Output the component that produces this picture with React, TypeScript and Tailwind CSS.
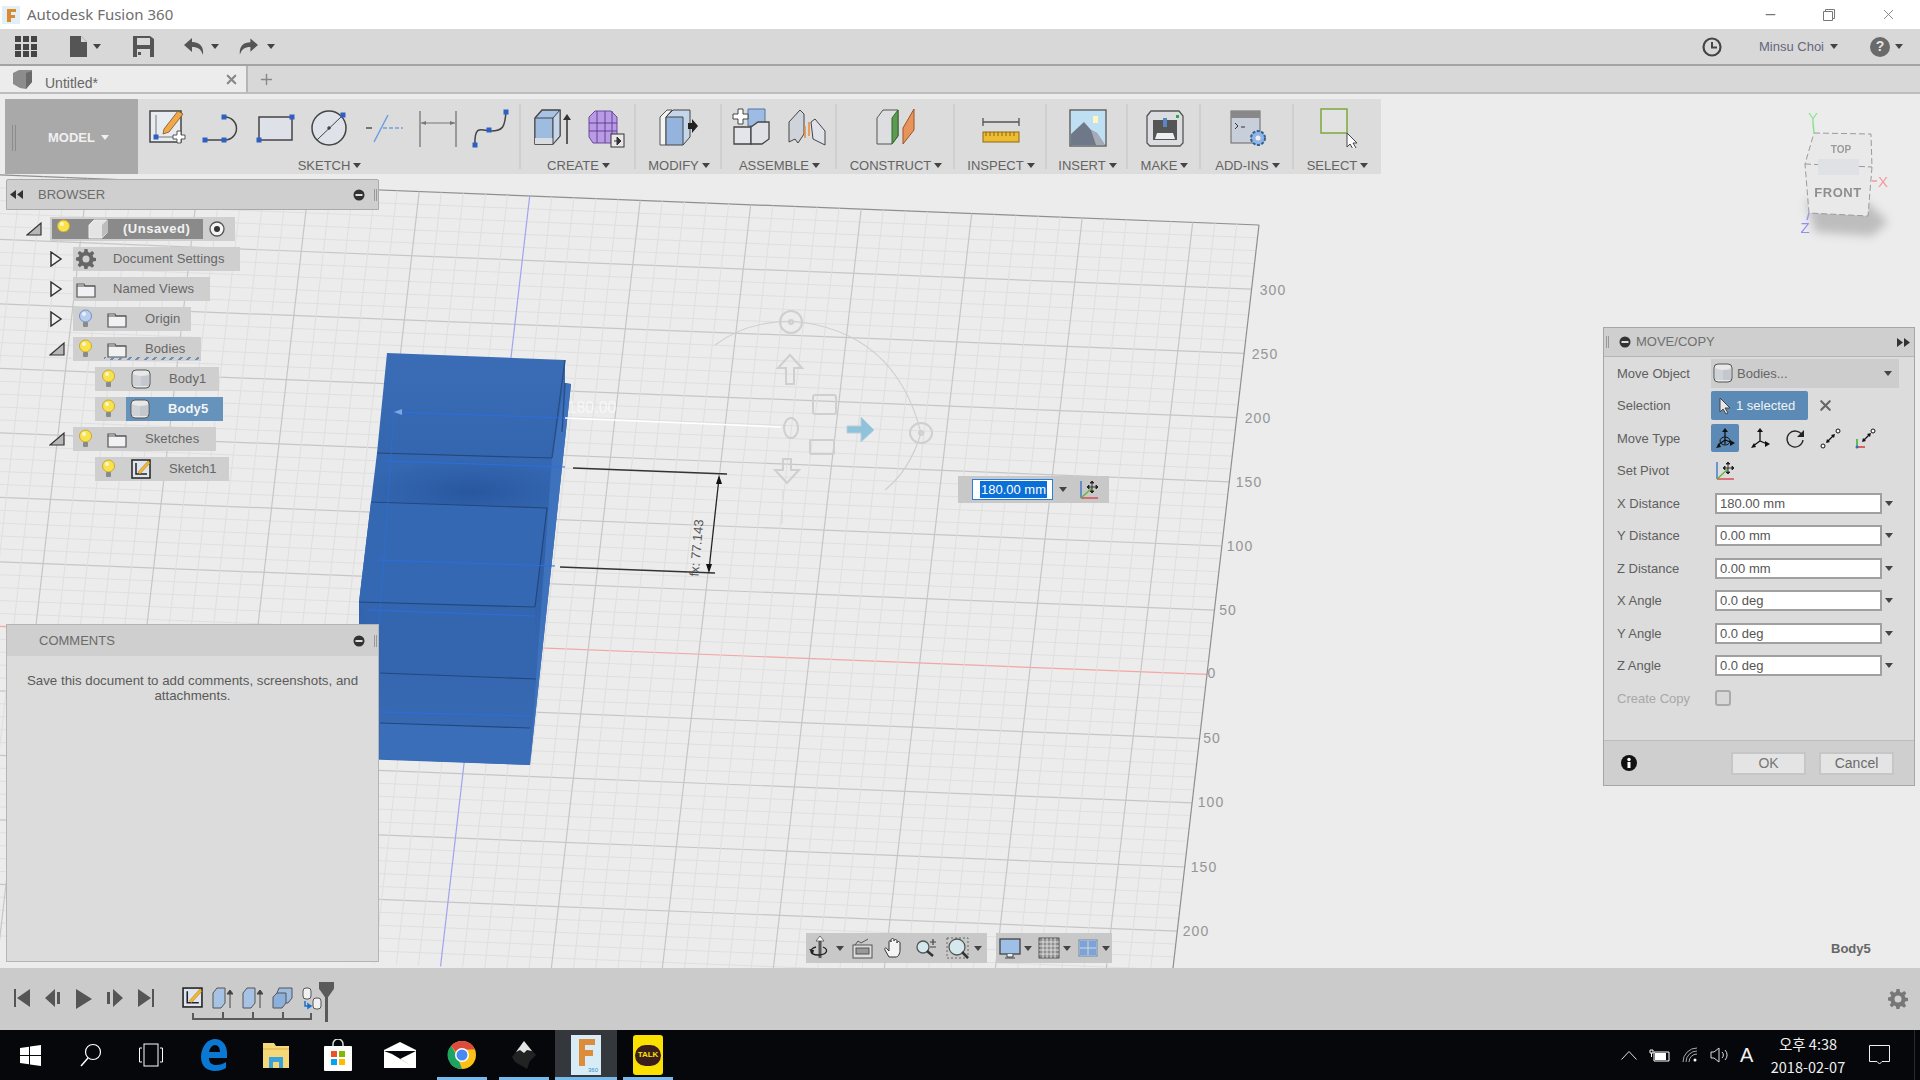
import type { ReactNode } from "react";
import { FiX, FiPlus, FiMinus } from "react-icons/fi";

const Caret = ({ className = "" }: { className?: string }) => (
  <svg width="8" height="5" viewBox="0 0 8 5" className={`shrink-0 ${className}`}>
    <path d="M0 0h8L4 5z" fill="currentColor" />
  </svg>
);

const Minus = () => (
  <svg width="12" height="12" viewBox="0 0 12 12">
    <circle cx="6" cy="6" r="5.5" fill="#333" />
    <rect x="2.5" y="5" width="7" height="2" fill="#ddd" />
  </svg>
);

const Bulb = ({ blue = false }: { blue?: boolean }) => (
  <svg width="15" height="20" viewBox="0 0 15 20">
    <circle cx="7.5" cy="7" r="6" fill={blue ? "#b9cdf0" : "#f8e34f"} stroke={blue ? "#6f8fc4" : "#c9a92a"} />
    <circle cx="6" cy="5" r="2" fill="#fff" opacity="0.7" />
    <rect x="5" y="13" width="5" height="5" rx="1" fill="#8a8a8a" />
  </svg>
);

const Folder = () => (
  <svg width="20" height="17" viewBox="0 0 20 17">
    <path d="M1 3h7l1 2h10v11H1z" fill="#f1f1f4" stroke="#555" strokeWidth="1.2" />
    <path d="M1 5h18" stroke="#555" />
  </svg>
);

const BodyIcon = () => (
  <svg width="20" height="20" viewBox="0 0 20 20">
    <rect x="1" y="1" width="18" height="18" rx="4" fill="#e8e8e8" stroke="#555" />
    <path d="M2 5q8 4 16 0v12H2z" fill="#cfd2d6" />
    <path d="M10 7h8v10h-8z" fill="#b9bcc2" opacity="0.5" />
  </svg>
);

const SketchIcon = ({ size = 20 }: { size?: number }) => (
  <svg width={size} height={size} viewBox="0 0 20 20">
    <rect x="1" y="1" width="18" height="18" fill="#dfe5ee" stroke="#222" strokeWidth="1.5" />
    <path d="M5 4v11h11" fill="none" stroke="#222" strokeWidth="1.5" />
    <path d="M7 13L17 2l2 2L9 15z" fill="#f2b632" stroke="#a9781c" strokeWidth="0.5" />
  </svg>
);

const Gear = ({ size = 20, color = "#666" }: { size?: number; color?: string }) => (
  <svg width={size} height={size} viewBox="0 0 20 20">
    <path
      d="M8.5 0h3l.5 3 1.8.8L16.300 2l2 2.200-1.700 2.400.7 1.800 2.700.6v3l-2.800.5-.7 1.800 1.700 2.400-2.100 2.100-2.400-1.700-1.800.7-.5 2.200h-3l-.5-2.800-1.800-.7L3.700 18.200l-2.100-2.100 1.700-2.400-.7-1.800L0 11.500v-3l2.600-.5.700-1.800L1.600 4l2.100-2 2.500 1.800L8 3z"
      fill={color}
    />
    <circle cx="10" cy="10" r="3.500" fill="#d0d0d0" />
  </svg>
);

const Twist = ({ open }: { open: boolean }) =>
  open ? (
    <svg width="16" height="16" viewBox="0 0 16 16">
      <path d="M1 14L15 2v12z" fill="#b8b8b8" stroke="#333" strokeWidth="1.200" />
    </svg>
  ) : (
    <svg width="14" height="16" viewBox="0 0 14 16">
      <path d="M2 1l10 7-10 7z" fill="#f2f2f2" stroke="#333" strokeWidth="1.500" />
    </svg>
  );

type TreeRowProps = {
  className: string;
  twist?: "open" | "closed";
  children: ReactNode;
};

const TreeRow = ({ className, twist, children }: TreeRowProps) => (
  <div className={`relative flex h-6 items-center bg-[#cfcfcf] text-[13px] tracking-[0.1px] text-[#666] ${className}`}>
    {twist && (
      <span className="absolute left-[-24px] top-1">
        <Twist open={twist === "open"} />
      </span>
    )}
    {children}
  </div>
);

const Browser = () => (
  <div className="absolute left-[6px] top-[85px] w-[373px]">
    <div className="flex h-[31px] items-center rounded-t-[2px] border border-[#aaa] bg-[#cfcfcf] pl-[3px] text-[13px] text-[#6b6b6b]">
      <svg width="14" height="9" viewBox="0 0 14 9" className="text-[#333]">
        <path d="M6 0v9L0 4.500zM13 0v9L7 4.500z" fill="currentColor" />
      </svg>
      <span className="ml-[14px]">BROWSER</span>
      <span className="ml-auto mr-[9px]">
        <Minus />
      </span>
      <span className="mr-[1px] h-3 w-[3px] border-x border-[#999]" />
    </div>
    <div className="mt-[7px] flex flex-col gap-[6px]">
      <TreeRow className="ml-[44px] w-[185px] font-bold" twist="open">
        <div className="ml-[2px] flex h-[20px] w-[151px] items-center bg-[#8a8a8a] text-[#f2f2f2]">
          <span className="ml-[4px] w-[15px]">
            <Bulb />
          </span>
          <svg width="20" height="20" viewBox="0 0 20 20" className="ml-[17px]">
            <path d="M1 6l5-5h13v13l-5 5H1z" fill="#e4e4e4" stroke="#eee" />
            <path d="M14 6v13l5-5V1z" fill="#bdbdbd" />
          </svg>
          <span className="ml-[15px] tracking-[0.5px]">(Unsaved)</span>
        </div>
        <svg width="16" height="16" viewBox="0 0 16 16" className="ml-[6px]">
          <circle cx="8" cy="8" r="7" fill="#f4f4f4" stroke="#555" strokeWidth="1.300" />
          <circle cx="8" cy="8" r="3" fill="#333" />
        </svg>
      </TreeRow>
      <TreeRow className="ml-[67px] w-[167px]" twist="closed">
        <span className="ml-[3px]">
          <Gear />
        </span>
        <span className="ml-[17px]">Document Settings</span>
      </TreeRow>
      <TreeRow className="ml-[67px] w-[137px]" twist="closed">
        <span className="ml-[3px]">
          <Folder />
        </span>
        <span className="ml-[17px]">Named Views</span>
      </TreeRow>
      <TreeRow className="ml-[67px] w-[118px]" twist="closed">
        <span className="ml-[5px]">
          <Bulb blue />
        </span>
        <span className="ml-[14px]">
          <Folder />
        </span>
        <span className="ml-[18px]">Origin</span>
      </TreeRow>
      <TreeRow className="ml-[67px] w-[128px]" twist="open">
        <span className="ml-[5px]">
          <Bulb />
        </span>
        <span className="ml-[14px]">
          <Folder />
        </span>
        <span className="ml-[18px]">Bodies</span>
        <span className="absolute bottom-[1px] left-[31px] h-[3px] w-[95px] bg-[repeating-linear-gradient(135deg,#6f8fb8_0_2px,transparent_2px_6px)]" />
      </TreeRow>
      <TreeRow className="ml-[89px] w-[124px]">
        <span className="ml-[6px]">
          <Bulb />
        </span>
        <span className="ml-[15px]">
          <BodyIcon />
        </span>
        <span className="ml-[18px]">Body1</span>
      </TreeRow>
      <TreeRow className="ml-[89px] w-[128px]">
        <span className="ml-[6px]">
          <Bulb />
        </span>
        <div className="ml-[10px] flex h-6 flex-1 items-center bg-[#6693bb] font-bold text-[#f4f4f4]">
          <span className="ml-[4px]">
            <BodyIcon />
          </span>
          <span className="ml-[18px]">Body5</span>
        </div>
      </TreeRow>
      <TreeRow className="ml-[67px] w-[143px]" twist="open">
        <span className="ml-[5px]">
          <Bulb />
        </span>
        <span className="ml-[14px]">
          <Folder />
        </span>
        <span className="ml-[18px]">Sketches</span>
      </TreeRow>
      <TreeRow className="ml-[89px] w-[134px]">
        <span className="ml-[6px]">
          <Bulb />
        </span>
        <span className="ml-[15px]">
          <SketchIcon />
        </span>
        <span className="ml-[18px]">Sketch1</span>
      </TreeRow>
    </div>
  </div>
);

const Comments = () => (
  <div className="absolute left-[6px] top-[530px] flex h-[338px] w-[373px] flex-col border border-[#b5b5b5] bg-[#dcdcdc]">
    <div className="flex h-[31px] shrink-0 items-center bg-[#cfcfcf] pl-[32px] text-[13px] text-[#6b6b6b]">
      COMMENTS
      <span className="ml-auto mr-[9px]">
        <Minus />
      </span>
      <span className="mr-[1px] h-3 w-[3px] border-x border-[#999]" />
    </div>
    <p className="mt-[17px] px-[16px] text-center text-[13.300px] leading-[15px] text-[#5a5a5a]">
      Save this document to add comments, screenshots, and attachments.
    </p>
  </div>
);

const Handle = ({ x, y }: { x: number; y: number }) => <rect x={x - 2.500} y={y - 2.500} width="5" height="5" fill="#2e5fc4" />;

const ribbonIcons: Record<string, ReactNode> = {
  newSketch: (
    <>
      <rect x="2" y="3" width="31" height="31" fill="#e8ebf0" stroke="#444" strokeWidth="1.500" />
      <path d="M8 7v22h20" fill="none" stroke="#777" />
      <Handle x={8} y={29} />
      <path d="M16 21L30 3l5 3-14 18-6 2z" fill="#f0a84a" stroke="#7a5520" strokeWidth="0.800" />
      <path d="M25 27h4v-4h4v4h4v4h-4v4h-4v-4h-4z" fill="#fff" stroke="#555" />
    </>
  ),
  line: (
    <>
      <path d="M3 32h20a11 11 0 0 0 0-23" fill="none" stroke="#444" strokeWidth="1.500" />
      <Handle x={3} y={32} />
      <Handle x={22} y={32} />
      <Handle x={22} y={9} />
    </>
  ),
  rect: (
    <>
      <rect x="3" y="9" width="33" height="23" fill="#dfe1e8" stroke="#444" strokeWidth="1.500" />
      <Handle x={3} y={32} />
      <Handle x={36} y={9} />
    </>
  ),
  circle: (
    <>
      <circle cx="19" cy="20" r="17" fill="#dfe2e8" stroke="#444" strokeWidth="1.500" />
      <path d="M7 32L32 8" stroke="#444" />
      <path d="M17 20h4M19 18v4" stroke="#222" />
      <Handle x={33} y={7} />
    </>
  ),
  construction: (
    <>
      <path d="M2 20h6" stroke="#555" strokeWidth="1.500" />
      <path d="M10 34L24 7" stroke="#6d9ee0" strokeWidth="1.500" />
      <path d="M19 20h20" stroke="#6d9ee0" strokeWidth="1.500" strokeDasharray="4 2" />
    </>
  ),
  dimension: (
    <>
      <path d="M2 3v36M38 3v36" stroke="#777" strokeWidth="1.300" />
      <path d="M3 15h34" stroke="#777" />
      <path d="M3 15l5-2v4zM37 15l-5-2v4z" fill="#777" />
    </>
  ),
  spline: (
    <>
      <path d="M3 37c-1-22 8-14 16-14 12 0 14-4 15-20" fill="none" stroke="#444" strokeWidth="1.500" />
      <Handle x={3} y={37} />
      <Handle x={17} y={22} />
      <Handle x={34} y={4} />
    </>
  ),
  extrude: (
    <>
      <path d="M2 10l7-8h18v26l-7 8H2z" fill="#a6c3e6" stroke="#444" strokeWidth="1.300" />
      <path d="M2 10h18v26H2z" fill="#9dbce0" stroke="#444" />
      <path d="M2 30h18v6H2z" fill="#d9dde2" />
      <path d="M20 10l7-8v26l-7 8z" fill="#c5d6ea" stroke="#444" />
      <path d="M34 36V10" stroke="#333" strokeWidth="1.500" />
      <path d="M30 12l4-6 4 6z" fill="#333" />
    </>
  ),
  form: (
    <>
      <path d="M4 9l6-6h16l6 6v20l-5 6H8l-4-6z" fill="#b99ae4" stroke="#6a4a9c" />
      <path d="M4 15h28M4 23h28M12 3v32M20 3v32M27 3v32" stroke="#5b3b8d" strokeWidth="0.900" />
      <rect x="26" y="26" width="13" height="13" fill="#e8e8e8" stroke="#333" />
      <path d="M29 33h5M32 29l4 4-4 4z" fill="#333" stroke="#333" />
    </>
  ),
  pressPull: (
    <>
      <path d="M1 37V9l7-7h5L7 9v28z" fill="#f4f4f4" stroke="#555" />
      <path d="M7 9l7-7h17v27l-7 8z" fill="#c5d6ea" stroke="#444" />
      <path d="M7 9h17v28H7z" fill="#94b4de" stroke="#444" />
      <path d="M29 15h4v-4l6 7-6 7v-4h-4z" fill="#222" />
    </>
  ),
  component: (
    <>
      <path d="M16 1h17v17H16z" fill="#9dbbe3" stroke="#55759f" />
      <path d="M2 19h17v17H2z" fill="#e3e5ea" stroke="#444" strokeWidth="1.300" />
      <path d="M19 19l7-5h11v17l-7 5H19z" fill="#dfe1e6" stroke="#444" strokeWidth="1.300" />
      <path d="M6 1h5v5h5v5h-5v5H6v-5H1V6h5z" fill="#fff" stroke="#444" />
    </>
  ),
  joint: (
    <>
      <path d="M2 34V14L13 2l4 4v20l-6 9-3-4z" fill="#cfd3da" stroke="#444" />
      <path d="M24 14l4-3 10 12v14l-12-6z" fill="#dfe2e8" stroke="#444" />
      <path d="M18 18v12M22 14v14" stroke="#e58a3c" strokeWidth="1.500" />
    </>
  ),
  plane: (
    <>
      <path d="M1 36V10l6-8h15v26l-6 8z" fill="#dcdee2" stroke="#555" />
      <path d="M16 10l6-8v26l-6 8z" fill="#5d9a52" stroke="#2e6b2b" />
      <path d="M27 36V20L38 1v21z" fill="#e8935a" stroke="#99552a" />
    </>
  ),
  measure: (
    <>
      <path d="M2 10v8M38 10v8M2 14h36" stroke="#555" strokeWidth="1.300" />
      <rect x="2" y="24" width="36" height="10" fill="#eebc33" stroke="#8a6a12" />
      <path d="M5 24v4M9 24v4M13 24v4M17 24v4M21 24v4M25 24v4M29 24v4M33 24v4" stroke="#6b5210" strokeWidth="0.800" />
    </>
  ),
  image: (
    <>
      <rect x="2" y="2" width="36" height="36" fill="#bfe0f2" stroke="#555" strokeWidth="1.300" />
      <rect x="25" y="8" width="5" height="7" fill="#fff6c4" />
      <path d="M3 37V26L16 14l7 8 6 3 8 12z" fill="#6e7888" />
      <path d="M23 22l6 3 8 12h-9z" fill="#a6acb6" />
    </>
  ),
  make: (
    <>
      <path d="M2 8l4-5h28l4 5v27l-3 3H5l-3-3z" fill="#dcdde0" stroke="#555" strokeWidth="1.300" />
      <rect x="8" y="12" width="24" height="20" fill="#555" />
      <path d="M18 10h4v9h-4z" fill="#5b86c4" />
      <path d="M12 25h16l2 6H10z" fill="#eee" />
      <rect x="31" y="7" width="3" height="3" fill="#2aa84a" />
    </>
  ),
  addins: (
    <>
      <rect x="3" y="3" width="29" height="32" fill="#c9cedb" stroke="#666" />
      <rect x="3" y="3" width="29" height="7" fill="#888" />
      <path d="M7 15l3 3-3 3M13 19h4" fill="none" stroke="#333" />
      <circle cx="30" cy="30" r="7" fill="#8fb4e6" stroke="#37618f" strokeWidth="2" strokeDasharray="3 1.500" />
      <circle cx="30" cy="30" r="2.500" fill="#eee" />
    </>
  ),
  select: (
    <>
      <rect x="3" y="1" width="26" height="24" fill="#e2e2e2" stroke="#7ca83c" strokeWidth="1.500" />
      <path d="M29 25v14l3-3 3 5 3-1-3-5h4z" fill="#fff" stroke="#444" />
    </>
  ),
};

type RibbonGroupData = { label: string; width: string; slot: string; icons: string[] };

const groups: RibbonGroupData[] = [
  { label: "SKETCH", width: "w-[383px]", slot: "w-[54px]", icons: ["newSketch", "line", "rect", "circle", "construction", "dimension", "spline"] },
  { label: "CREATE", width: "w-[115px]", slot: "w-[52px]", icons: ["extrude", "form"] },
  { label: "MODIFY", width: "w-[86px]", slot: "w-[52px]", icons: ["pressPull"] },
  { label: "ASSEMBLE", width: "w-[115px]", slot: "w-[55px]", icons: ["component", "joint"] },
  { label: "CONSTRUCT", width: "w-[118px]", slot: "w-[52px]", icons: ["plane"] },
  { label: "INSPECT", width: "w-[92px]", slot: "w-[52px]", icons: ["measure"] },
  { label: "INSERT", width: "w-[81px]", slot: "w-[52px]", icons: ["image"] },
  { label: "MAKE", width: "w-[73px]", slot: "w-[52px]", icons: ["make"] },
  { label: "ADD-INS", width: "w-[93px]", slot: "w-[52px]", icons: ["addins"] },
  { label: "SELECT", width: "w-[87px]", slot: "w-[52px]", icons: ["select"] },
];

const Ribbon = () => (
  <div className="absolute left-[5px] top-[5px] flex h-[75px] w-[1376px] bg-[#dcdcdc]">
    <div className="flex w-[133px] items-center bg-[#a9a9a9] pt-[2px] text-[13px] font-bold text-[#f0f0f0]">
      <span className="ml-[7px] h-[26px] w-[4px] border-x border-[#8c8c8c]" />
      <span className="ml-[32px]">MODEL</span>
      <Caret className="ml-[6px] text-[#f0f0f0]" />
    </div>
    {groups.map((g, idx) => (
      <div key={g.label} className={`relative flex flex-col ${g.width}`}>
        <div className="flex h-[57px] items-center justify-center">
          {g.icons.map((name) => (
            <div key={name} className={`flex justify-center ${g.slot}`}>
              <svg width="40" height="40" viewBox="0 0 40 40">
                {ribbonIcons[name]}
              </svg>
            </div>
          ))}
        </div>
        <div className="flex h-[18px] items-center justify-center gap-[3px] text-[13px] leading-none text-[#636363]">
          {g.label}
          <Caret className="text-[#444]" />
        </div>
        {idx < groups.length - 1 && <span className="absolute bottom-[5px] right-0 top-[5px] w-[2px] bg-[#cfcfcf]" />}
      </div>
    ))}
  </div>
);

const GRID_DX = 22.1;
const GRID_DY = 0.88;
const EDGE_DX = -1.486;
const EDGE_DY = 12.84;

const axisLabels: [string, number, number][] = [
  ["300", 1273, 295],
  ["250", 1265, 359],
  ["200", 1258, 423],
  ["150", 1249, 487],
  ["100", 1240, 551],
  ["50", 1228, 615],
  ["0", 1212, 678],
  ["50", 1212, 743],
  ["100", 1211, 807],
  ["150", 1204, 872],
  ["200", 1196, 936],
];

const ModelView = () => {
  const horizontals = Array.from({ length: 60 }, (_, j) => j);
  const verticals = Array.from({ length: 60 }, (_, i) => i);
  return (
    <svg className="absolute inset-0 h-full w-full" viewBox="0 94 1920 874" preserveAspectRatio="none">
      <defs>
        <linearGradient id="bodyShade" x1="0" y1="0" x2="0" y2="1">
          <stop offset="0" stopColor="#3a6db6" />
          <stop offset="0.5" stopColor="#2f60a9" />
          <stop offset="1" stopColor="#3a6cb5" />
        </linearGradient>
        <radialGradient id="bandShade" cx="0.55" cy="0.7" r="0.6">
          <stop offset="0" stopColor="#28579f" />
          <stop offset="1" stopColor="#3568b2" />
        </radialGradient>
      </defs>
      {horizontals.map((j) => {
        const x1 = 1259 + EDGE_DX * j;
        const y1 = 225 + EDGE_DY * j;
        return (
          <line
            key={`h${j}`}
            x1={x1}
            y1={y1}
            x2={x1 - GRID_DX * 60}
            y2={y1 - GRID_DY * 60}
            stroke={j === 0 ? "#8f8f8f" : j === 35 ? "#f2a6a6" : j % 5 === 0 ? "#c6c6c6" : "#dfdfdf"}
            strokeWidth={j === 0 || j % 5 === 0 ? 1.2 : 1}
          />
        );
      })}
      {verticals.map((i) => {
        const x1 = 1259 - GRID_DX * i;
        const y1 = 225 - GRID_DY * i;
        return (
          <line
            key={`v${i}`}
            x1={x1}
            y1={y1}
            x2={x1 + EDGE_DX * 60}
            y2={y1 + EDGE_DY * 60}
            stroke={i === 0 ? "#8f8f8f" : i === 33 ? "#a3a3ee" : (33 - i) % 5 === 0 ? "#c6c6c6" : "#dfdfdf"}
            strokeWidth={i === 0 || (33 - i) % 5 === 0 ? 1.2 : 1}
          />
        );
      })}
      {axisLabels.map(([label, x, y]) => (
        <text key={`${label}${y}`} x={x} y={y} textAnchor="middle" fontSize="14" letterSpacing="1" fill="#959595" fontFamily="Liberation Sans, sans-serif">
          {label}
        </text>
      ))}

      {/* bodies */}
      <path d="M387 353L565 360V383L571 384L530 765L359 759V602L371 502L377 500L377 453z" fill="url(#bodyShade)" />
      <path d="M377 453L552 458L547 508L371 502z" fill="url(#bandShade)" />
      <path d="M565 383L571 384L530 765L536 679L552 458z" fill="#3f72bd" />
      <path d="M371 502L547 508L535 607L359 602z" fill="#3568b2" />
      <path d="M359 602L535 607L536 679L380 673z" fill="#3466af" />
      <path d="M380 723L530 728L530 765L380 759z" fill="#3b6eb8" />
      <path d="M377 453L552 458M371 502L547 508L535 607M359 602L535 607M380 673L536 679M380 723L530 728" fill="none" stroke="#24477d" strokeWidth="1.200" />
      <path d="M565 360L552 458M565 383L562 432" fill="none" stroke="#2a4f88" strokeWidth="1.500" />
      <path d="M394 412L565 418M386 461L565 467M378 560L555 566M368 610L535 616M380 712L530 716" stroke="#2c6ee0" strokeWidth="1" />
      <path d="M394 412L374 700" stroke="#2c6ee0" opacity="0.6" />
      <path d="M394 412l8-3v6z" fill="#7ea4e6" />
      <path d="M565 418L781 427" stroke="#fff" strokeWidth="1.500" />
      <text x="592" y="413" fontSize="16" textAnchor="middle" fill="#fff" opacity="0.6" fontFamily="Liberation Sans, sans-serif">
        180.00
      </text>

      {/* move gizmo */}
      <g fill="none" stroke="#cfcfcf" strokeWidth="2">
        <path d="M715 345Q745 322 791 321Q895 330 921 433Q910 470 885 490" strokeWidth="1.200" />
        <ellipse cx="791" cy="322" rx="11" ry="11" />
        <circle cx="791" cy="322" r="2" />
        <ellipse cx="921" cy="433" rx="11" ry="10" />
        <circle cx="921" cy="433" r="2" />
        <ellipse cx="791" cy="428" rx="7" ry="10" />
        <rect x="813" y="395" width="23" height="19" rx="2" />
        <rect x="810" y="440" width="24" height="14" rx="1" />
        <path d="M790 355l-12 13h8v16h8v-16h8z" />
        <path d="M787 483l-12-13h8v-11h8v11h8z" />
      </g>
      <path d="M847 426h14v-9l13 13-13 12v-9h-14z" fill="#8fc3dc" stroke="#b9cfd9" />
      <path d="M783 490v10M782 510v14" stroke="#d5d5d5" />

      {/* dimension */}
      <path d="M573 468L727 474M560 567L715 573" stroke="#333" strokeWidth="1.300" />
      <path d="M719 478L709 570" stroke="#222" strokeWidth="1.200" />
      <path d="M719 475l-3 9h6zM709 573l-3-9h6z" fill="#111" />
      <text x="697" y="552" fontSize="13" textAnchor="middle" fill="#555" transform="rotate(-85 697 548)" fontFamily="Liberation Sans, sans-serif">
        fx: 77.143
      </text>

      {/* view cube */}
      <path d="M1806 200L1868 203L1888 222L1872 236L1815 232z" fill="#bdbdbd" className="blur-[5px]" />
      <g className="blur-[0.6px]">
        <path d="M1814 133L1871 134L1872 167L1868 216L1809 213L1805 164z" fill="#e9e9e9" />
        <path d="M1814 133L1871 134L1872 167L1868 216L1809 213L1805 164zM1805 164L1872 167" fill="none" stroke="#9a9a9a" strokeDasharray="6 3" />
        <rect x="1818" y="159" width="41" height="16" fill="#dfe1e4" />
        <text x="1841" y="153" fontSize="10" fontWeight="bold" textAnchor="middle" fill="#9b9b9b" fontFamily="Liberation Sans, sans-serif">TOP</text>
        <text x="1838" y="197" fontSize="13" fontWeight="bold" textAnchor="middle" letterSpacing="0.500" fill="#8e8e8e" fontFamily="Liberation Sans, sans-serif">FRONT</text>
        <path d="M1814 133l-1-10" stroke="#8ee08e" strokeWidth="1.500" />
        <text x="1813" y="123" fontSize="15" textAnchor="middle" fill="#8fe58f" fontFamily="Liberation Sans, sans-serif">Y</text>
        <path d="M1872 181h5" stroke="#f29b9b" strokeWidth="1.500" />
        <text x="1883" y="187" fontSize="15" textAnchor="middle" fill="#f29b9b" fontFamily="Liberation Sans, sans-serif">X</text>
        <path d="M1809 213l-2 7" stroke="#9a9af2" strokeWidth="1.500" />
        <text x="1805" y="233" fontSize="15" textAnchor="middle" fill="#8f8ff2" fontFamily="Liberation Sans, sans-serif">Z</text>
      </g>
    </svg>
  );
};

const AxisIcon = ({ size = 20 }: { size?: number }) => (
  <svg width={size} height={size} viewBox="0 0 20 20">
    <path d="M2 1v17" stroke="#2b6fc9" strokeWidth="1.300" />
    <path d="M2 18h17" stroke="#d9363e" strokeWidth="1.300" />
    <path d="M2 18L13 8" stroke="#5fb52f" strokeWidth="1.300" />
    <path d="M13 1v12M8 7h11M13 1l-2 2h4zM13 13l-2-2h4zM8 7l2-2v4zM19 7l-2-2v4z" stroke="#222" fill="#222" strokeWidth="0.900" />
  </svg>
);

const DimInput = () => (
  <div className="absolute left-[958px] top-[382px] flex h-[27px] w-[151px] items-center bg-[#c8c8c8]">
    <div className="ml-[14px] flex h-[21px] w-[81px] items-center border border-[#2a7fd8] bg-white pl-[7px] pr-[5px] text-[13px]">
      <span className="bg-[#0a6fd6] px-[1px] leading-[17px] whitespace-nowrap text-white">180.00 mm</span>
    </div>
    <Caret className="ml-[6px] text-[#444]" />
    <span className="ml-[12px]">
      <AxisIcon />
    </span>
  </div>
);

const MoveRow = ({ label, muted = false, children }: { label: string; muted?: boolean; children: ReactNode }) => (
  <div className="flex h-[32.500px] items-center">
    <span className={`w-[107px] pl-[13px] text-[13px] whitespace-nowrap ${muted ? "text-[#a8a8a8]" : "text-[#5f5f5f]"}`}>{label}</span>
    {children}
  </div>
);

const ValueInput = ({ value }: { value: string }) => (
  <>
    <div className="ml-[4px] flex h-[21px] w-[167px] items-center border-2 border-[#a0a0a0] bg-white pl-[3px] text-[13px] text-[#555]">{value}</div>
    <Caret className="ml-[3px] text-[#444]" />
  </>
);

const moveTypes: ReactNode[] = [
  <>
    <path d="M11 3v14M4 18l7-5 8 3" stroke="#111" strokeWidth="1.300" fill="none" />
    <path d="M11 1l-3 4h6zM21 16l-5-3v6zM2 21l5-1-2-4z" fill="#111" />
    <ellipse cx="11" cy="14" rx="5" ry="4" fill="none" stroke="#111" />
  </>,
  <>
    <path d="M11 4v10M4 19l7-5 7 3" stroke="#111" strokeWidth="1.300" fill="none" />
    <path d="M11 1l-3 4h6zM21 17l-5-3v6zM2 21l5-1-2-4z" fill="#111" />
  </>,
  <>
    <path d="M18 8a8 8 0 1 0 1 5" fill="none" stroke="#222" strokeWidth="1.300" />
    <path d="M20 3v7h-7z" fill="#222" />
  </>,
  <>
    <rect x="2" y="17" width="4" height="4" rx="2" fill="#fff" stroke="#111" />
    <circle cx="19" cy="4" r="2" fill="#fff" stroke="#111" />
    <path d="M9 14l5-5" stroke="#111" strokeWidth="1.300" />
    <path d="M7 16l1-4 3 3zM16 7l-4 1 3 3z" fill="#111" />
  </>,
  <>
    <path d="M3 12v8" stroke="#3aaa35" strokeWidth="1.500" />
    <path d="M3 20h8" stroke="#d9363e" strokeWidth="1.500" />
    <circle cx="3" cy="20" r="1.500" fill="#2b6fc9" />
    <circle cx="19" cy="4" r="2" fill="#fff" stroke="#111" />
    <path d="M10 13l5-5" stroke="#111" strokeWidth="1.300" />
    <path d="M8 15l1-4 3 3zM17 6l-4 1 3 3z" fill="#111" />
  </>,
];

const MovePanel = () => (
  <div className="absolute left-[1603px] top-[233px] flex h-[459px] w-[312px] flex-col border border-[#a6a6a6] bg-[#dcdcdc]">
    <div className="flex h-[29px] shrink-0 items-center border-b border-[#b5b5b5] bg-[#cfcfcf] text-[13px] text-[#6f6f6f]">
      <span className="ml-[2px] h-3 w-[3px] border-x border-[#999]" />
      <span className="ml-[10px]">
        <Minus />
      </span>
      <span className="ml-[5px]">MOVE/COPY</span>
      <svg width="13" height="9" viewBox="0 0 13 9" className="ml-auto mr-[4px]">
        <path d="M0 0l6 4.500L0 9zM7 0l6 4.500L7 9z" fill="#333" />
      </svg>
    </div>
    <div className="flex-1">
      <MoveRow label="Move Object">
        <div className="flex h-[29px] w-[188px] items-center bg-[#cdcdcd] pl-[2px] text-[13px] text-[#666]">
          <BodyIcon />
          <span className="ml-[4px]">Bodies...</span>
          <Caret className="ml-auto mr-[7px] text-[#444]" />
        </div>
      </MoveRow>
      <MoveRow label="Selection">
        <div className="flex h-[29px] w-[97px] items-center rounded-[2px] bg-[#5a8ab5] pl-[7px] text-[13px] text-[#f2f2f2]">
          <svg width="14" height="18" viewBox="0 0 14 18">
            <path d="M2 1v14l3-3 3 5 2-1-3-5h5z" fill="#e8e8e8" stroke="#444" />
          </svg>
          <span className="ml-[4px] whitespace-nowrap">1 selected</span>
        </div>
        <FiX className="ml-[9px] text-[#666]" size={17} strokeWidth={3} />
      </MoveRow>
      <MoveRow label="Move Type">
        <div className="flex gap-[7px]">
          {moveTypes.map((icon, idx) => (
            <div key={idx} className={`flex h-7 w-7 items-center justify-center rounded-[2px] ${idx === 0 ? "bg-[#5a8ab5]" : ""}`}>
              <svg width="22" height="22" viewBox="0 0 22 22">
                {icon}
              </svg>
            </div>
          ))}
        </div>
      </MoveRow>
      <MoveRow label="Set Pivot">
        <span className="ml-[4px]">
          <AxisIcon />
        </span>
      </MoveRow>
      <MoveRow label="X Distance">
        <ValueInput value="180.00 mm" />
      </MoveRow>
      <MoveRow label="Y Distance">
        <ValueInput value="0.00 mm" />
      </MoveRow>
      <MoveRow label="Z Distance">
        <ValueInput value="0.00 mm" />
      </MoveRow>
      <MoveRow label="X Angle">
        <ValueInput value="0.0 deg" />
      </MoveRow>
      <MoveRow label="Y Angle">
        <ValueInput value="0.0 deg" />
      </MoveRow>
      <MoveRow label="Z Angle">
        <ValueInput value="0.0 deg" />
      </MoveRow>
      <MoveRow label="Create Copy" muted>
        <span className="ml-[4px] h-4 w-4 rounded-[3px] border-2 border-[#aaa] bg-[#d8d8d8]" />
      </MoveRow>
    </div>
    <div className="flex h-[45px] shrink-0 items-center border-t border-[#bdbdbd] bg-[#cfcfcf] text-[14px] text-[#777]">
      <svg width="16" height="16" viewBox="0 0 16 16" className="ml-[17px]">
        <circle cx="8" cy="8" r="8" fill="#111" />
        <rect x="6.500" y="7" width="3" height="6" fill="#fff" />
        <circle cx="8" cy="4.500" r="1.700" fill="#fff" />
      </svg>
      <button className="ml-[94px] h-[23px] w-[75px] border-2 border-[#c6c6c6] bg-[#e4e4e4] leading-none">OK</button>
      <button className="ml-[13px] h-[23px] w-[75px] border-2 border-[#c6c6c6] bg-[#e4e4e4] leading-none text-[#6a6a6a]">Cancel</button>
    </div>
  </div>
);

const NavBar = () => (
  <div className="absolute left-[806px] top-[839px] flex gap-[9px]">
    <div className="flex h-[30px] w-[181px] items-center bg-[#c8c8c8] pl-[3px] text-[#444]">
      <svg width="22" height="24" viewBox="0 0 22 24">
        <path d="M11 2v20" stroke="#555" strokeWidth="3" />
        <path d="M11 0l-4 5h8z" fill="#fff" stroke="#444" strokeWidth="0.700" />
        <path d="M7 11c-8 2-6 8 2 8s12-5 5-8" fill="none" stroke="#222" strokeWidth="1.300" />
        <path d="M0 13l5 1-1 4z" fill="#222" />
      </svg>
      <Caret className="ml-[5px]" />
      <svg width="21" height="21" viewBox="0 0 21 21" className="ml-[8px]">
        <rect x="1" y="7" width="19" height="13" fill="#dcdcdc" stroke="#555" />
        <rect x="4" y="10" width="13" height="6" fill="#999" stroke="#555" />
        <path d="M3 7l3-4 3 2 7-4" fill="none" stroke="#555" />
      </svg>
      <svg width="22" height="22" viewBox="0 0 22 22" className="ml-[10px]">
        <path d="M6 20l-4-7c-1-2 1-3 2-1l2 2V5c0-2 2-2 2 0V3c0-2 3-2 3 0v1c0-2 3-2 3 0v2c0-2 3-2 3 0v7c0 4-2 7-4 7z" fill="#f4f4f4" stroke="#333" />
      </svg>
      <svg width="22" height="22" viewBox="0 0 22 22" className="ml-[10px]">
        <circle cx="8" cy="10" r="6" fill="#d5e8ee" stroke="#555" strokeWidth="1.300" />
        <path d="M12 14l6 5" stroke="#333" strokeWidth="2.500" />
        <path d="M15 5h6M18 2v6M15 10h6" stroke="#444" strokeWidth="1.200" />
      </svg>
      <svg width="24" height="24" viewBox="0 0 24 24" className="ml-[9px]">
        <rect x="1" y="2" width="21" height="20" fill="none" stroke="#666" strokeDasharray="2 2" />
        <circle cx="11" cy="11" r="8" fill="#d5e8ee" stroke="#555" strokeWidth="1.300" />
        <path d="M16 16l6 6" stroke="#333" strokeWidth="2.500" />
      </svg>
      <Caret className="ml-[4px]" />
    </div>
    <div className="flex h-[30px] w-[116px] items-center bg-[#c8c8c8] pl-[3px] text-[#444]">
      <svg width="22" height="22" viewBox="0 0 22 22">
        <rect x="1" y="2" width="20" height="15" fill="#9fc0e6" stroke="#444" strokeWidth="1.300" />
        <path d="M8 17v3h6v-3M6 21h10" fill="#eee" stroke="#444" />
      </svg>
      <Caret className="ml-[3px]" />
      <svg width="22" height="22" viewBox="0 0 22 22" className="ml-[6px]">
        <rect x="1" y="1" width="20" height="20" fill="#8f8f8f" stroke="#555" />
        <path d="M5 1v20M9 1v20M13 1v20M17 1v20M1 5h20M1 9h20M1 13h20M1 17h20" stroke="#eee" strokeWidth="0.800" />
      </svg>
      <Caret className="ml-[3px]" />
      <svg width="20" height="18" viewBox="0 0 20 18" className="ml-[7px]">
        <rect x="1" y="1" width="18" height="16" fill="#d8d8d8" stroke="#6a88b4" />
        <path d="M2 2h7.500v6.500H2zM10.500 2H18v6.500h-7.500zM2 9.500h7.500V16H2zM10.500 9.500H18V16h-7.500z" fill="#7ba3d8" />
      </svg>
      <Caret className="ml-[4px]" />
    </div>
  </div>
);

const QuickBar = () => (
  <div className="flex h-[37px] shrink-0 items-center border-b-2 border-[#a3a3a3] bg-[#d8d8d8] text-[#555]">
    <div className="ml-[15px] grid h-[21px] w-[22px] grid-cols-3 gap-[1.500px]">
      {Array.from({ length: 9 }).map((_, i) => (
        <span key={i} className="bg-[#444]" />
      ))}
    </div>
    <svg width="18" height="21" viewBox="0 0 18 21" className="ml-[33px]">
      <path d="M0 0h11l6 6v15H0z" fill="#555" />
      <path d="M11 0v6h6z" fill="#d8d8d8" />
    </svg>
    <Caret className="ml-[5px] text-[#444]" />
    <svg width="21" height="21" viewBox="0 0 21 21" className="ml-[32px]">
      <path d="M0 0h17l4 3v18H0z" fill="#555" />
      <rect x="4" y="2" width="13" height="7" fill="#d8d8d8" />
      <rect x="4" y="13" width="13" height="8" fill="#d8d8d8" />
      <rect x="5" y="16" width="3" height="3" fill="#555" />
    </svg>
    <svg width="21" height="17" viewBox="0 0 21 17" className="ml-[30px]">
      <path d="M8 0L0 7l8 7V9c6 0 9 2 11 8 1-8-3-13-11-13z" fill="#555" />
    </svg>
    <Caret className="ml-[6px] text-[#444]" />
    <svg width="20" height="17" viewBox="0 0 21 17" className="ml-[19px]">
      <path d="M13 0l8 7-8 7V9C7 9 4 11 2 17 1 9 5 4 13 4z" fill="#555" />
    </svg>
    <Caret className="ml-[9px] text-[#444]" />
    <svg width="20" height="20" viewBox="0 0 20 20" className="ml-auto">
      <circle cx="10" cy="10" r="8.500" fill="none" stroke="#444" strokeWidth="2.200" />
      <path d="M10 5v5.500h5" fill="none" stroke="#444" strokeWidth="2" />
    </svg>
    <span className="ml-[37px] text-[13px] text-[#66667a]">Minsu Choi</span>
    <Caret className="ml-[6px] text-[#444]" />
    <span className="ml-[32px] flex h-5 w-5 items-center justify-center rounded-full bg-[#6a6a6a] text-[14px] font-bold text-[#e4e4e4]">?</span>
    <Caret className="ml-[5px] mr-[17px] text-[#444]" />
  </div>
);

const TabRow = () => (
  <div className="flex h-[28px] shrink-0 items-stretch border-b-2 border-[#bdbdbd] bg-[#d8d8d8]">
    <div className="flex w-[248px] items-center border-r-2 border-[#b5b5b5] bg-[#ececec] pl-[12px]">
      <svg width="21" height="21" viewBox="0 0 21 21">
        <path d="M1 4l6-3h13v12l-6 7-6-1-7-4z" fill="#8c8c8c" />
        <path d="M14 4v16l6-7V2z" fill="#6a6a6a" />
      </svg>
      <span className="ml-[12px] mt-[8px] text-[14px] leading-none text-[#666]">Untitled*</span>
      <FiX className="ml-auto mr-[7px] text-[#888]" size={15} strokeWidth={3.500} />
    </div>
    <div className="flex items-center pl-[10px] text-[#888]">
      <FiPlus size={17} />
    </div>
  </div>
);

const TitleBar = () => (
  <div className="flex h-[29px] shrink-0 items-center bg-white">
    <svg width="18" height="18" viewBox="0 0 18 18" className="ml-[2px]">
      <rect width="18" height="18" fill="#e2eff6" />
      <path d="M5 3h9v3H9v3h4v3H9v4H5z" fill="#dc8a32" />
    </svg>
    <span className="ml-[7px] font-['Noto_Sans',sans-serif] text-[15px] text-[#6e6e6e]">Autodesk Fusion 360</span>
    <FiMinus className="ml-auto text-[#777]" size={15} />
    <svg width="12" height="12" viewBox="0 0 12 12" className="ml-[45px] text-[#777]">
      <path d="M.500 2.500h9v9h-9zM2.500 2.500v-2h9v9h-2" fill="none" stroke="currentColor" />
    </svg>
    <FiX className="ml-[45px] mr-[23px] text-[#777]" size={17} strokeWidth={1.200} />
  </div>
);

const Timeline = () => (
  <div className="flex h-[62px] shrink-0 items-center bg-[#cbcbcb]">
    <div className="ml-[6px] flex text-[#555]">
      <div className="flex w-[31px] justify-center">
        <svg width="16" height="18" viewBox="0 0 16 18">
          <path d="M0 0h2v18H0zM16 0v18L3 9z" fill="currentColor" />
        </svg>
      </div>
      <div className="flex w-[31px] justify-center">
        <svg width="16" height="18" viewBox="0 0 16 18">
          <path d="M0 9l10-9v18zM12 3h3v12h-3z" fill="currentColor" />
        </svg>
      </div>
      <div className="flex w-[31px] justify-center">
        <svg width="16" height="20" viewBox="0 0 16 20">
          <path d="M0 0l16 10L0 20z" fill="currentColor" />
        </svg>
      </div>
      <div className="flex w-[31px] justify-center">
        <svg width="16" height="18" viewBox="0 0 16 18">
          <path d="M16 9L6 0v18zM0 3h3v12H0z" fill="currentColor" />
        </svg>
      </div>
      <div className="flex w-[31px] justify-center">
        <svg width="16" height="18" viewBox="0 0 16 18">
          <path d="M16 0h-2v18h2zM0 0v18l13-9z" fill="currentColor" />
        </svg>
      </div>
    </div>
    <div className="relative ml-[16px] flex">
      <div className="flex w-[30px] justify-center">
        <SketchIcon size={21} />
      </div>
      {[0, 1].map((k) => (
        <div key={k} className="flex w-[30px] justify-center">
          <svg width="21" height="22" viewBox="0 0 21 22">
            <path d="M1 6l4-5h8v15l-4 5H1z" fill="#a6c3e6" stroke="#555" />
            <path d="M18 21V4M15 7l3-4 3 4z" stroke="#444" fill="#444" />
          </svg>
        </div>
      ))}
      <div className="flex w-[30px] justify-center">
        <svg width="21" height="22" viewBox="0 0 21 22">
          <path d="M7 1h13v10l-4 5H5V6z" fill="#9dbce0" stroke="#555" />
          <path d="M1 10l4-4h9v10l-4 5H1z" fill="#8cb0dc" stroke="#555" />
        </svg>
      </div>
      <div className="flex w-[30px] justify-center">
        <svg width="20" height="24" viewBox="0 0 20 24">
          <rect x="1" y="1" width="8" height="11" rx="3" fill="#f1f1f1" stroke="#555" />
          <rect x="11" y="11" width="8" height="11" rx="3" fill="#f1f1f1" stroke="#555" />
          <path d="M3 14v5h5M6 17l3 2-3 2z" fill="none" stroke="#1e6fc9" strokeWidth="1.500" />
        </svg>
      </div>
      <div className="absolute left-[15px] top-[26px] h-[7px] w-[120px] border-x-2 border-b-2 border-[#5a5a5a]">
        <span className="absolute bottom-0 left-[28px] h-[6px] w-[2px] bg-[#5a5a5a]" />
        <span className="absolute bottom-0 left-[58px] h-[6px] w-[2px] bg-[#5a5a5a]" />
        <span className="absolute bottom-0 left-[88px] h-[6px] w-[2px] bg-[#5a5a5a]" />
      </div>
      <svg width="16" height="40" viewBox="0 0 16 42" preserveAspectRatio="none" className="absolute left-[142px] top-[-5px]">
        <path d="M0 0h15v7l-6 9v26H6V16L0 7z" fill="#5a5a5a" />
      </svg>
    </div>
    <span className="ml-auto mr-[12px]">
      <Gear size={20} color="#777" />
    </span>
  </div>
);

const tiles: { name: string; state: "" | "open" | "active"; icon: ReactNode }[] = [
  {
    name: "edge",
    state: "",
    icon: (
      <svg width="26" height="32" viewBox="0 0 26 32">
        <path
          fillRule="evenodd"
          d="M3 7C6 2 10 0 14 0c7 0 12 6 12 14v5H8c0 5 3 7 7 7 4 0 7-1 10-3v6c-3 2-7 3-11 3C6 32 0 27 0 18 0 14 1 10 3 7zM8 13h11c0-4-2-7-5-7-3 0-5 3-6 7z"
          fill="#0b78d4"
        />
      </svg>
    ),
  },
  {
    name: "files",
    state: "",
    icon: (
      <svg width="28" height="28" viewBox="0 0 28 28">
        <path d="M1 2h11l2 3h13v22H1z" fill="#f4d97a" />
        <rect x="1" y="7" width="26" height="2" fill="#e8c45a" />
        <path d="M7 16h14v11h-4v-6h-6v6H7z" fill="#39a4dc" />
      </svg>
    ),
  },
  {
    name: "store",
    state: "",
    icon: (
      <svg width="28" height="32" viewBox="0 0 28 32">
        <path d="M9 8V5a5 5 0 0 1 10 0v3" fill="none" stroke="#ddd" strokeWidth="1.500" />
        <rect y="7" width="28" height="25" rx="1" fill="#fff" />
        <rect x="7" y="12" width="6" height="6" fill="#f25022" />
        <rect x="15" y="12" width="6" height="6" fill="#7fba00" />
        <rect x="7" y="20" width="6" height="6" fill="#00a4ef" />
        <rect x="15" y="20" width="6" height="6" fill="#ffb900" />
      </svg>
    ),
  },
  {
    name: "mail",
    state: "",
    icon: (
      <svg width="32" height="26" viewBox="0 0 32 26">
        <path d="M0 8L16 0l16 8v18H0z" fill="#fff" />
        <path d="M0 9h32L16 17l12 7L8 12z" fill="#05070a" />
      </svg>
    ),
  },
  {
    name: "chrome",
    state: "",
    icon: (
      <svg width="30" height="30" viewBox="0 0 30 30">
        <circle cx="15" cy="15" r="14" fill="#fbc116" />
        <path d="M15 1a14 14 0 0 1 12.800 8.500H15A6 6 0 0 0 9.500 13L4.200 5.700A14 14 0 0 1 15 1z" fill="#dd4b3e" />
        <path d="M4.200 5.700L10 16l5 13A14 14 0 0 1 4.200 5.700z" fill="#1da462" />
        <circle cx="15" cy="15" r="7" fill="#fff" />
        <circle cx="15" cy="15" r="5.500" fill="#4a89f3" />
      </svg>
    ),
  },
  {
    name: "inkscape",
    state: "",
    icon: (
      <svg width="28" height="30" viewBox="0 0 28 30">
        <path d="M14 1l12 14-6 6-3 8-5-3-7-4-3-5z" fill="#222" />
        <path d="M14 1l8 10-5-1-3 3-4-3-4 2z" fill="#e4e4e4" />
      </svg>
    ),
  },
  {
    name: "fusion",
    state: "active",
    icon: (
      <div className="relative flex h-[40px] w-[30px] justify-center bg-[#d7ecf7]">
        <svg width="22" height="32" viewBox="0 0 22 32" className="mt-[2px]">
          <path d="M4 2h16v6H10v5h8v6h-8v10H4z" fill="#dd8c3a" />
        </svg>
        <span className="absolute bottom-0 right-[3px] text-[6px] leading-[9px] text-[#3a8cc4]">360</span>
      </div>
    ),
  },
  {
    name: "talk",
    state: "",
    icon: (
      <div className="flex h-[40px] w-[30px] items-center justify-center rounded-[3px] bg-[#fae100]">
        <span className="flex h-[21px] w-[26px] items-center justify-center rounded-full bg-[#3a1d1d] text-[8px] font-bold text-[#fae100]">TALK</span>
      </div>
    ),
  },
];

const Taskbar = () => (
  <div className="flex h-[50px] shrink-0 items-center bg-[#05070a] text-white">
    <div className="flex w-[61px] justify-center">
      <svg width="21" height="21" viewBox="0 0 21 21">
        <path d="M0 3l9-1.300V10H0zM10 1.500L21 0v10H10zM0 11h9v8.300L0 18zM10 11h11v10l-11-1.500z" fill="#fff" />
      </svg>
    </div>
    <div className="flex w-[60px] justify-center">
      <svg width="22" height="24" viewBox="0 0 22 24">
        <circle cx="13" cy="9" r="7.500" fill="none" stroke="#fff" strokeWidth="1.200" />
        <path d="M8 15l-7 8" stroke="#fff" strokeWidth="1.500" />
      </svg>
    </div>
    <div className="flex w-[60px] justify-center">
      <svg width="24" height="24" viewBox="0 0 24 24">
        <rect x="5" y="1" width="14" height="22" fill="none" stroke="#fff" />
        <path d="M3 5H.500v14H3M21 5h2.500v14H21" fill="none" stroke="#fff" />
      </svg>
    </div>
    <div className="ml-[2px] flex h-full">
      {tiles.map((t) => (
        <div key={t.name} className={`relative flex h-full w-[62px] items-center justify-center ${t.state === "active" ? "bg-[#34373b]" : ""}`}>
          {t.icon}
          {t.name !== "edge" && t.name !== "files" && t.name !== "store" && t.name !== "mail" && (
            <span className={`absolute bottom-0 h-[3px] bg-[#76b9ed] ${t.state === "active" ? "inset-x-0" : "inset-x-[6px]"}`} />
          )}
        </div>
      ))}
    </div>
    <svg width="16" height="9" viewBox="0 0 16 9" className="ml-auto">
      <path d="M.500 8.500l7.500-8 7.500 8" fill="none" stroke="#ddd" />
    </svg>
    <svg width="21" height="13" viewBox="0 0 21 13" className="ml-[12px]">
      <path d="M1 1h3v3H1zM2.500 4v4M5 3h15v9H5z" fill="none" stroke="#fff" />
      <rect x="6" y="4" width="11" height="7" fill="#fff" />
    </svg>
    <svg width="16" height="16" viewBox="0 0 16 16" className="ml-[12px]">
      <path d="M1 15A14 14 0 0 1 15 1M4 15A11 11 0 0 1 15 4M7 15a8 8 0 0 1 8-8" fill="none" stroke="#aaa" />
      <circle cx="13" cy="13" r="1.500" fill="#fff" />
    </svg>
    <svg width="20" height="16" viewBox="0 0 20 16" className="ml-[12px]">
      <path d="M1 5h3l5-4v14l-5-4H1zM12 5a4 4 0 0 1 0 6M15 3a7 7 0 0 1 0 10" fill="none" stroke="#ddd" />
    </svg>
    <span className="ml-[10px] w-[17px] text-[20px] leading-none text-[#f2f2f2]">A</span>
    <div className="ml-[13px] flex w-[76px] flex-col items-center font-['Noto_Sans_CJK_KR','Noto_Sans',sans-serif] text-[14.500px] leading-[23px] text-[#f0f0f0]">
      <span>오후 4:38</span>
      <span>2018-02-07</span>
    </div>
    <svg width="21" height="20" viewBox="0 0 21 20" className="ml-[23px]">
      <path d="M.500 .500h20v16H13l-2.500 2.500L8 16.500H.500z" fill="none" stroke="#eee" />
    </svg>
    <span className="ml-[24px] mr-[5px] h-full w-px bg-[#2a2a2a]" />
  </div>
);

export default function App() {
  return (
    <div className="flex h-[1080px] w-[1920px] flex-col overflow-hidden font-['Liberation_Sans',Arial,sans-serif]">
      <TitleBar />
      <QuickBar />
      <TabRow />
      <div className="relative flex-1 overflow-hidden bg-[#ececec]">
        <ModelView />
        <Ribbon />
        <Browser />
        <Comments />
        <DimInput />
        <MovePanel />
        <NavBar />
        <span className="absolute left-[1831px] top-[845px] text-[13px] font-bold text-[#666]">Body5</span>
      </div>
      <Timeline />
      <Taskbar />
    </div>
  );
}
